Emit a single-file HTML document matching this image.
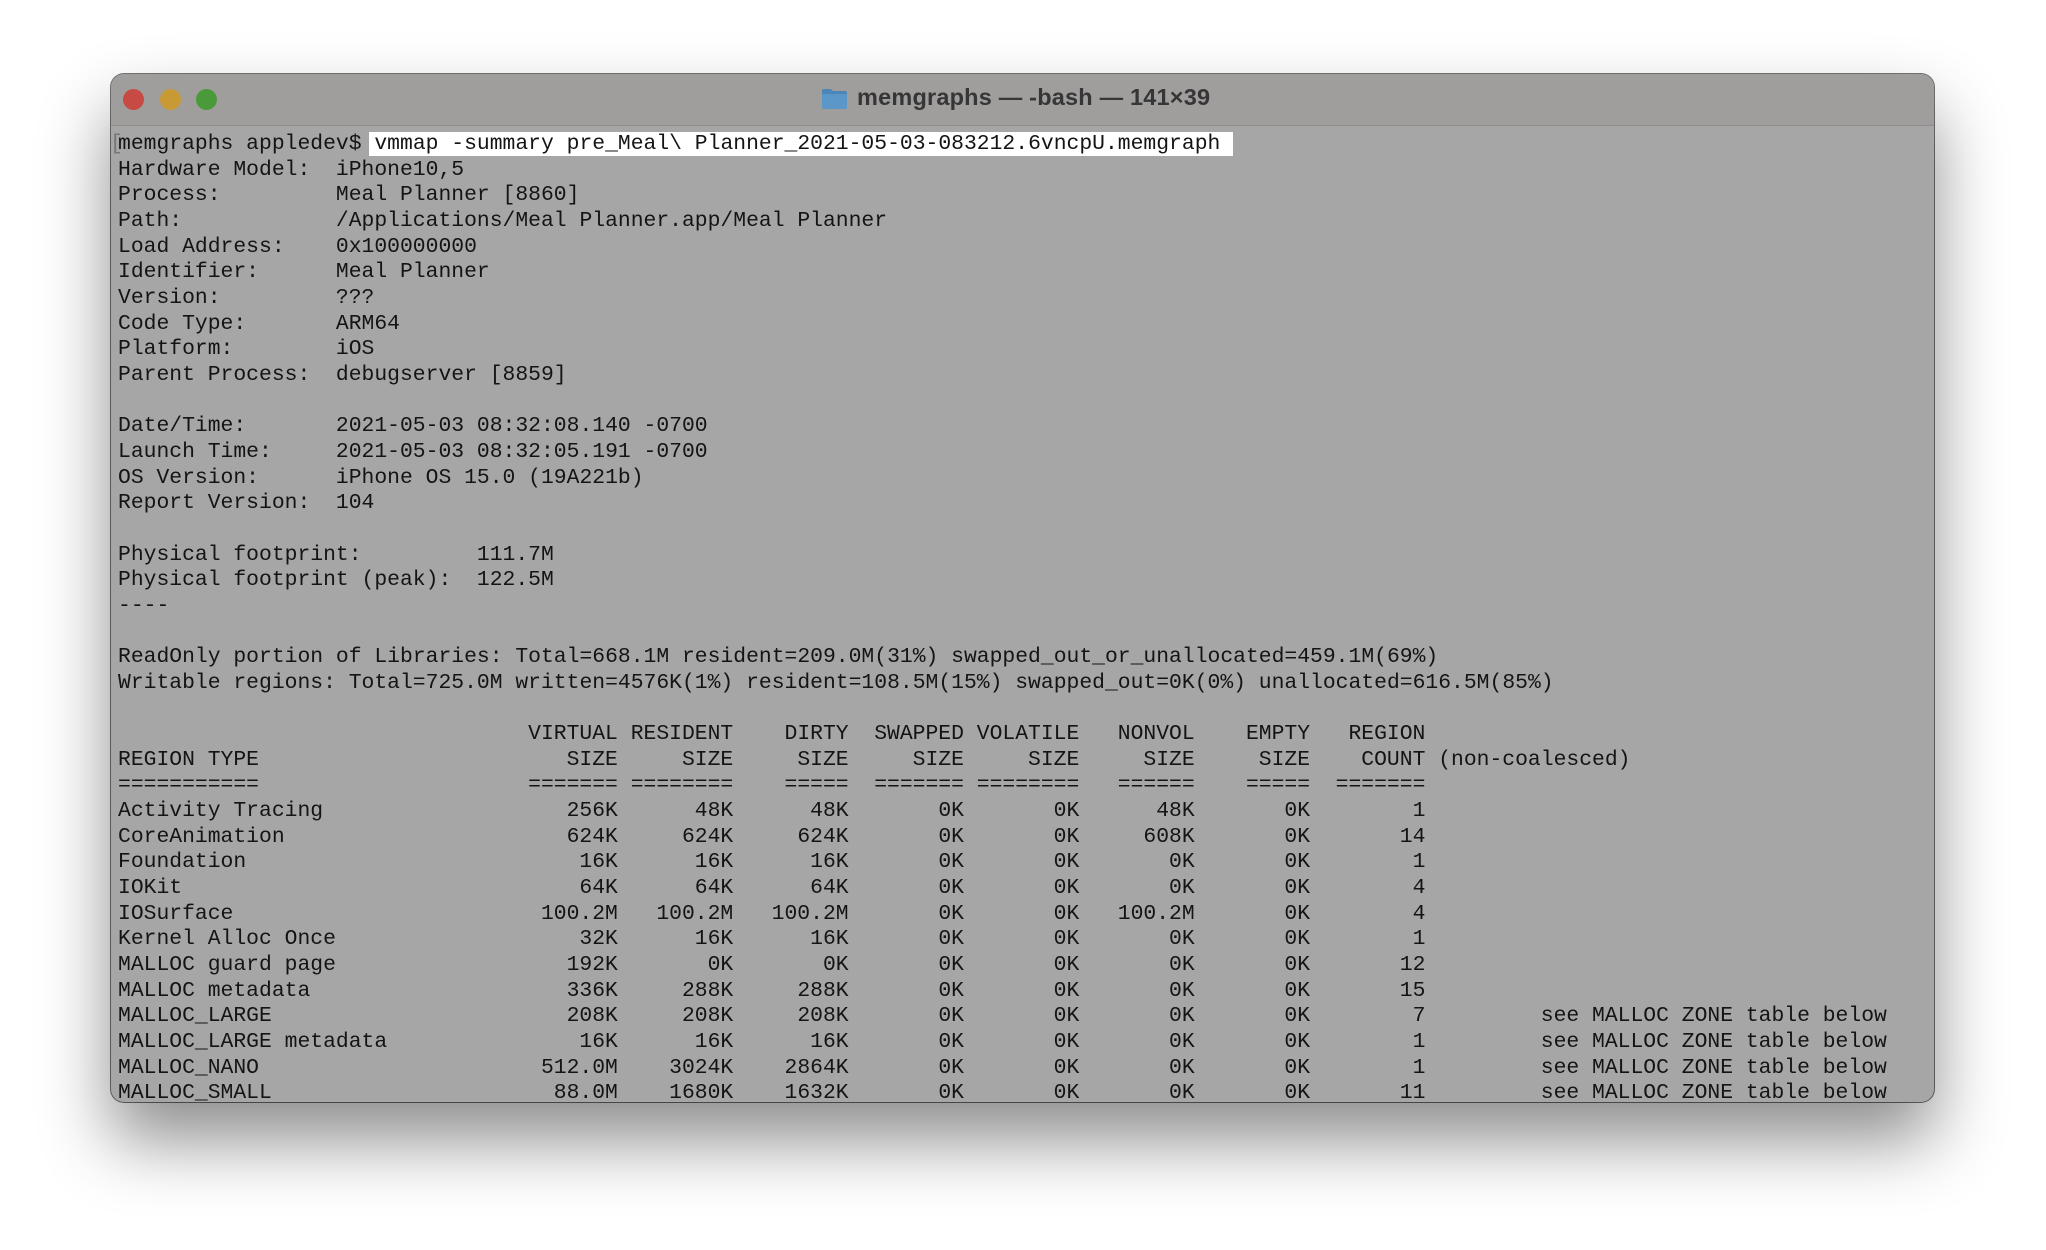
<!DOCTYPE html>
<html><head><meta charset="utf-8">
<style>
html,body{margin:0;padding:0;background:#fff;width:2046px;height:1250px;overflow:hidden;}
.win{position:absolute;left:111px;top:74px;width:1823px;height:1028px;border-radius:13px;overflow:hidden;background:#a6a6a6;
box-shadow:0 38px 70px rgba(0,0,0,0.45),0 0 0 1px rgba(0,0,0,0.55);}
.title{position:absolute;left:0;top:0;width:100%;height:51px;background:#a09d9d;border-bottom:1px solid #8e8c8c;}
.dot{position:absolute;top:15px;width:21px;height:21px;border-radius:50%;}
.t{position:absolute;left:746px;top:10px;font:bold 23.5px "Liberation Sans",sans-serif;color:#363636;white-space:nowrap;letter-spacing:0.2px;}
.folder{position:absolute;left:710px;top:14px;width:27px;height:22px;}
pre{position:absolute;left:0;top:58px;margin:0;padding-left:7px;font:21.36px/25.65px "Liberation Mono",monospace;color:#141414;white-space:pre;}
.br{position:absolute;left:-1px;top:0;color:#777;}
.hl{background:#fff;padding-left:5px;margin-left:-5px;}
.c{display:inline-block;text-align:right;width:9ch;}
.n{display:inline-block;width:31ch;}
.c1{display:inline-block;text-align:right;width:8ch;}
</style></head><body>
<div class="win">
<div class="title">
<div class="dot" style="left:12px;background:#c84a44"></div>
<div class="dot" style="left:49px;background:#c89a36"></div>
<div class="dot" style="left:85px;background:#4a9a3c"></div>
<svg class="folder" viewBox="0 0 27 22"><path d="M1 3 Q1 1 3 1 H10 L12 3 H24 Q26 3 26 5 V20 Q26 21 24 21 H3 Q1 21 1 19 Z" fill="#4a86b8"/><rect x="1" y="6" width="25" height="15" rx="1.5" fill="#5b97c8"/></svg>
<div class="t">memgraphs — -bash — 141×39</div>
</div>
<pre><span class="br">[</span>memgraphs appledev$ <span class="hl">vmmap -summary pre_Meal\ Planner_2021-05-03-083212.6vncpU.memgraph </span>
Hardware Model:  iPhone10,5
Process:         Meal Planner [8860]
Path:            /Applications/Meal Planner.app/Meal Planner
Load Address:    0x100000000
Identifier:      Meal Planner
Version:         ???
Code Type:       ARM64
Platform:        iOS
Parent Process:  debugserver [8859]

Date/Time:       2021-05-03 08:32:08.140 -0700
Launch Time:     2021-05-03 08:32:05.191 -0700
OS Version:      iPhone OS 15.0 (19A221b)
Report Version:  104

Physical footprint:         111.7M
Physical footprint (peak):  122.5M
----

ReadOnly portion of Libraries: Total=668.1M resident=209.0M(31%) swapped_out_or_unallocated=459.1M(69%)
Writable regions: Total=725.0M written=4576K(1%) resident=108.5M(15%) swapped_out=0K(0%) unallocated=616.5M(85%)

<span class="n"></span><span class="c1">VIRTUAL</span><span class="c">RESIDENT</span><span class="c">DIRTY</span><span class="c">SWAPPED</span><span class="c">VOLATILE</span><span class="c">NONVOL</span><span class="c">EMPTY</span><span class="c">REGION</span>
<span class="n">REGION TYPE</span><span class="c1">SIZE</span><span class="c">SIZE</span><span class="c">SIZE</span><span class="c">SIZE</span><span class="c">SIZE</span><span class="c">SIZE</span><span class="c">SIZE</span><span class="c">COUNT</span> (non-coalesced)
<span class="n">===========</span><span class="c1">=======</span><span class="c">========</span><span class="c">=====</span><span class="c">=======</span><span class="c">========</span><span class="c">======</span><span class="c">=====</span><span class="c">=======</span>
<span class="n">Activity Tracing</span><span class="c1">256K</span><span class="c">48K</span><span class="c">48K</span><span class="c">0K</span><span class="c">0K</span><span class="c">48K</span><span class="c">0K</span><span class="c">1</span>
<span class="n">CoreAnimation</span><span class="c1">624K</span><span class="c">624K</span><span class="c">624K</span><span class="c">0K</span><span class="c">0K</span><span class="c">608K</span><span class="c">0K</span><span class="c">14</span>
<span class="n">Foundation</span><span class="c1">16K</span><span class="c">16K</span><span class="c">16K</span><span class="c">0K</span><span class="c">0K</span><span class="c">0K</span><span class="c">0K</span><span class="c">1</span>
<span class="n">IOKit</span><span class="c1">64K</span><span class="c">64K</span><span class="c">64K</span><span class="c">0K</span><span class="c">0K</span><span class="c">0K</span><span class="c">0K</span><span class="c">4</span>
<span class="n">IOSurface</span><span class="c1">100.2M</span><span class="c">100.2M</span><span class="c">100.2M</span><span class="c">0K</span><span class="c">0K</span><span class="c">100.2M</span><span class="c">0K</span><span class="c">4</span>
<span class="n">Kernel Alloc Once</span><span class="c1">32K</span><span class="c">16K</span><span class="c">16K</span><span class="c">0K</span><span class="c">0K</span><span class="c">0K</span><span class="c">0K</span><span class="c">1</span>
<span class="n">MALLOC guard page</span><span class="c1">192K</span><span class="c">0K</span><span class="c">0K</span><span class="c">0K</span><span class="c">0K</span><span class="c">0K</span><span class="c">0K</span><span class="c">12</span>
<span class="n">MALLOC metadata</span><span class="c1">336K</span><span class="c">288K</span><span class="c">288K</span><span class="c">0K</span><span class="c">0K</span><span class="c">0K</span><span class="c">0K</span><span class="c">15</span>
<span class="n">MALLOC_LARGE</span><span class="c1">208K</span><span class="c">208K</span><span class="c">208K</span><span class="c">0K</span><span class="c">0K</span><span class="c">0K</span><span class="c">0K</span><span class="c">7</span>         see MALLOC ZONE table below
<span class="n">MALLOC_LARGE metadata</span><span class="c1">16K</span><span class="c">16K</span><span class="c">16K</span><span class="c">0K</span><span class="c">0K</span><span class="c">0K</span><span class="c">0K</span><span class="c">1</span>         see MALLOC ZONE table below
<span class="n">MALLOC_NANO</span><span class="c1">512.0M</span><span class="c">3024K</span><span class="c">2864K</span><span class="c">0K</span><span class="c">0K</span><span class="c">0K</span><span class="c">0K</span><span class="c">1</span>         see MALLOC ZONE table below
<span class="n">MALLOC_SMALL</span><span class="c1">88.0M</span><span class="c">1680K</span><span class="c">1632K</span><span class="c">0K</span><span class="c">0K</span><span class="c">0K</span><span class="c">0K</span><span class="c">11</span>         see MALLOC ZONE table below
</pre>
</div>
</body></html>
